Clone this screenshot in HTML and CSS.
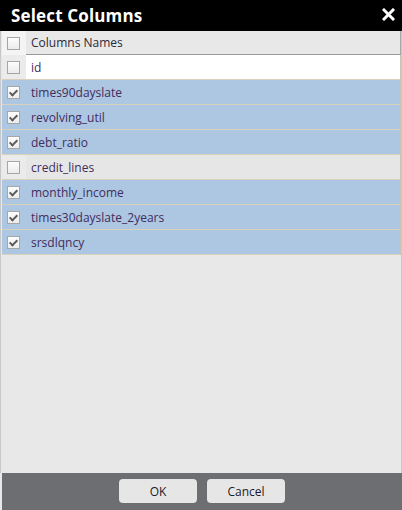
FILE: index.html
```html
<!DOCTYPE html>
<html>
<head>
<meta charset="utf-8">
<link rel="stylesheet" href="styles.css">
</head>
<body>
<div class="dialog">
  <div class="titlebar">
    <span class="title">Select Columns</span>
    <svg class="close" width="13" height="13" viewBox="0 0 13 13"><path d="M2 2 L11 11 M11 2 L2 11" stroke="#fff" stroke-width="3" stroke-linecap="square"/></svg>
  </div>
  <div class="body">
    <div class="grid">
      <div class="row head">
        <div class="cbcell"><span class="cb"></span></div>
        <div class="name">Columns Names</div>
      </div>
      <div class="row white">
        <div class="cbcell"><span class="cb"></span></div>
        <div class="name">id</div>
      </div>
      <div class="row sel">
        <div class="cbcell"><span class="cb on"></span></div>
        <div class="name">times90dayslate</div>
      </div>
      <div class="row sel">
        <div class="cbcell"><span class="cb on"></span></div>
        <div class="name">revolving_util</div>
      </div>
      <div class="row sel">
        <div class="cbcell"><span class="cb on"></span></div>
        <div class="name">debt_ratio</div>
      </div>
      <div class="row grey">
        <div class="cbcell"><span class="cb"></span></div>
        <div class="name">credit_lines</div>
      </div>
      <div class="row sel">
        <div class="cbcell"><span class="cb on"></span></div>
        <div class="name">monthly_income</div>
      </div>
      <div class="row sel">
        <div class="cbcell"><span class="cb on"></span></div>
        <div class="name">times30dayslate_2years</div>
      </div>
      <div class="row sel">
        <div class="cbcell"><span class="cb on"></span></div>
        <div class="name">srsdlqncy</div>
      </div>
    </div>
  </div>
  <div class="footer">
    <button class="btn">OK</button>
    <button class="btn">Cancel</button>
  </div>
</div>
</body>
</html>
```
FILE: styles.css
```css
html, body { margin: 0; padding: 0; }
body { width: 402px; height: 510px; overflow: hidden; font-family: "Open Sans", "DejaVu Sans", sans-serif; }
.dialog { width: 402px; height: 510px; display: flex; flex-direction: column; box-sizing: border-box; border-left: 1px solid #c8c8c8; border-right: 1px solid #c8c8c8; background: #e8e8e8; }
.titlebar { height: 31px; background: #000; display: flex; align-items: center; justify-content: space-between; padding: 0 7px 0 11px; margin: 0 -1px; }
.title { color: #fff; font-weight: 700; font-size: 17px; letter-spacing: 0.15px; }
.close { margin-top: -3px; }
.body { flex: 1; padding: 0 0 0 1px; }
.grid { width: 398px; border-right: 1px solid #c9c4b4; }
.row { display: flex; height: 24px; border-bottom: 1px solid #d8d2bc; color: #3f2d5c; font-size: 12px; }
.row.head { background: #e8e8e8; color: #2a2a3a; border-bottom: none; }
.row.head .cbcell { background: #f4f4f4; }
.row.head .name { border-bottom: 1px solid #999; border-right: 1px solid #a8a8a8; margin-right: -1px; }
.row.white { background: #fff; }
.row.white .cbcell { background: #ebebeb; }
.row.sel { background: #adc6e2; }
.row.grey { background: #e6e6e6; }
.row.grey .cbcell { background: #ebebeb; }
.cbcell { width: 24px; display: flex; align-items: center; justify-content: center; flex: none; padding-right: 1px; box-sizing: border-box; }
.name { flex: 1; display: flex; align-items: center; padding-left: 5px; }
.cb { width: 11px; height: 11px; border: 1px solid #a6a6a6; background: linear-gradient(#fdfdfd, #ececec); position: relative; }
.cb.on::after { content: ""; position: absolute; left: 3px; top: 1px; width: 3px; height: 6px; border: solid #5a5a5a; border-width: 0 2px 2px 0; transform: rotate(45deg); }
.footer { height: 37px; background: #6d6e72; display: flex; align-items: center; justify-content: center; gap: 10px; padding-bottom: 1px; margin: 0 -1px; border-left: 2px solid #e8e8e8; box-sizing: border-box; }
.btn { width: 78px; height: 24px; border: none; border-radius: 4px; background: #e6e6e6; font-family: "Open Sans", "DejaVu Sans", sans-serif; font-size: 12px; color: #1a1a2a; padding: 0; }
```
